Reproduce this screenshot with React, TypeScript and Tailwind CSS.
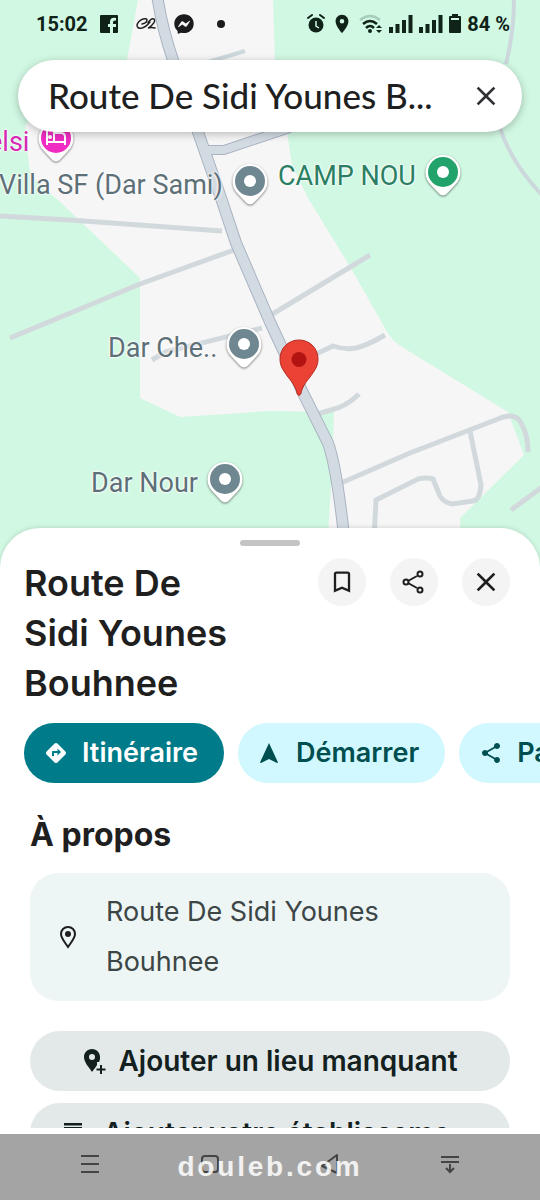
import React from 'react';
import { FaFacebookMessenger } from 'react-icons/fa';
import { MdClose, MdDirections, MdLocationOn, MdShare, MdTurnedInNot } from 'react-icons/md';

interface Place {
  name: string;
  color: string;
  textClass: string;
  position: string;
  hotel?: boolean;
}

const PLACES: Place[] = [
  { name: 'elsi', color: '#f02cc3', textClass: 'text-[#d32bb3]', position: '-left-3 top-[119px]', hotel: true },
  { name: 'Villa SF (Dar Sami)', color: '#6f8790', textClass: 'text-[#5d7078]', position: '-left-px top-[162px]' },
  { name: 'CAMP NOU', color: '#22a36b', textClass: 'text-[#2a7f62]', position: 'left-[278px] top-[153px]' },
  { name: 'Dar Che..', color: '#6f8790', textClass: 'text-[#5d7078]', position: 'left-[108px] top-[325px]' },
  { name: 'Dar Nour', color: '#6f8790', textClass: 'text-[#5d7078]', position: 'left-[91px] top-[460px]' },
];

const MINOR_ROADS = [
  'M0 216 L70 220 L222 231',
  'M10 338 L80 309 L140 284 L234 250',
  'M266 318 L370 255',
  'M152 360 L165 352 L262 328',
  'M312 356 L333 346 Q345 350 356 348 Q368 345 385 335',
  'M314 415 L338 408 Q350 403 359 394',
  'M341 483 L410 453 L498 419 Q517 411 522 425 Q528 435 528 452',
  'M470 431 L481 485 Q480 500 473 501 L452 504 Q443 502 440 496 L433 479 Q426 477 418 479 L376 500 L374 540',
  'M511 510 L545 485',
];

const THIN_ROADS = ['M514 0 Q514 32 506 64', 'M500 128 Q512 165 545 198', 'M208 62 L245 51'];

const MAIN_ROAD = 'M157 -5 Q162 28 173 60 L198 132 L220 195 L236 243 L270 322 L303 393 L328 443 Q337 468 345 545';
const SIDE_ROAD = 'M206 150 L224 150 L290 128';

const PlacePin: React.FC<{ color: string; hotel?: boolean }> = ({ color, hotel }) => (
  <svg className="h-11 w-10 shrink-0 drop-shadow-[0_1px_1px_rgba(0,0,0,0.5)]" viewBox="0 0 40 44">
    <path fill="#fff" d="M20 1A17.500 17.500 0 0 0 2.500 18.500c0 5 2 9 5.500 12.500l8.500 9a5 5 0 0 0 7 0L32 31c3.500-3.500 5.500-7.500 5.500-12.500A17.500 17.500 0 0 0 20 1z" />
    <circle cx="20" cy="18" r="15" fill={color} />
    {hotel ? (
      <g fill="none" stroke="#fff" strokeWidth="2">
        <path d="M11 10v15M11 22h18M29 25v-8q0-4-4-4h-7v9" />
        <circle cx="14" cy="17" r="1" fill="#fff" />
      </g>
    ) : (
      <circle cx="20" cy="18" r="6" fill="#fff" />
    )}
  </svg>
);

const MapCanvas: React.FC = () => (
  <div className="absolute inset-0 overflow-hidden bg-[#d1f8e2]">
    <svg className="h-full w-full" viewBox="0 0 540 570" preserveAspectRatio="xMinYMin slice">
      <path
        fill="#f6f6f6"
        d="M138 0H273L275 60L287 132L292 165L308 198L352 270L386 330Q392 341 402 347L508 412L524 455L460 518L462 570H326L332 470L334 412L270 411L180 417L140 398V278L57 199Q30 180 29 165L25 125L127 60z"
      />
      <g fill="none" stroke="#d2d9dd" strokeWidth="5">
        {MINOR_ROADS.map(d => <path key={d} d={d} />)}
      </g>
      <g fill="none" stroke="#ccd8dc" strokeWidth="4">
        {THIN_ROADS.map(d => <path key={d} d={d} />)}
      </g>
      {/* casing first, then the surface, so junctions stay open */}
      <g fill="none" stroke="#aab3c2">
        <path d={SIDE_ROAD} strokeWidth="10" />
        <path d={MAIN_ROAD} strokeWidth="12" />
      </g>
      <g fill="none" stroke="#d3dbe2">
        <path d={SIDE_ROAD} strokeWidth="8" />
        <path d={MAIN_ROAD} strokeWidth="10" />
      </g>
    </svg>

    {PLACES.map(place => (
      <div key={place.name} className={`absolute flex items-center gap-[7px] ${place.position}`}>
        <span className={`font-[Roboto,sans-serif] text-[27px] leading-[46px] whitespace-nowrap [text-shadow:0_0_2px_#fff,0_0_2px_#fff,0_0_3px_#fff] ${place.textClass}`}>
          {place.name}
        </span>
        <PlacePin color={place.color} hotel={place.hotel} />
      </div>
    ))}

    <svg className="absolute left-[279px] top-[339px] h-[58px] w-10" viewBox="0 0 40 58">
      <path
        fill="#ea4335"
        stroke="#b5281f"
        d="M20 1C9 1 1 9.500 1 20c0 7 3 11 8 18 5 6 8 11 9 16 .5 3 3.500 3 4 0 1-5 4-10 9-16 5-7 8-11 8-18C39 9.500 31 1 20 1z"
      />
      <circle cx="20" cy="20.500" r="7.500" fill="#b31412" />
    </svg>
  </div>
);

const SignalBars: React.FC = () => (
  <svg className="h-5 w-6" viewBox="0 0 24 20" fill="currentColor">
    <path d="M0 13h4v6H0zM6.500 10h4v9h-4zM13 6h4v13h-4zM19.500 1h4v18h-4z" />
  </svg>
);

const StatusBar: React.FC = () => (
  <div className="flex h-12 items-center justify-between pr-[30px] pl-9 font-[Roboto,sans-serif] text-xl font-bold text-[#0f2319]">
    <div className="flex items-center">
      <span>15:02</span>
      <svg className="ml-3 h-[18px] w-[18px]" viewBox="0 0 18 18">
        <path fill="currentColor" d="M1 0h16q1 0 1 1v16q0 1-1 1h-4v-6h3V9h-3V7q0-2 3-1.500V3q-6-1-6 4v2H8v3h2v6H1q-1 0-1-1V1q0-1 1-1z" />
      </svg>
      <svg className="ml-[18px] h-3.5 w-5" viewBox="0 0 20 14" fill="none" stroke="#222" strokeWidth="1.500" strokeLinecap="round">
        <path d="M6 7q5-1 5-4 0-2-4-1-5 2-6 6 0 4 5 3 4-1 8-6" />
        <path d="M12 6q3-5 6-4 2 2-2 6-3 3-4 3 4-1 7 0" />
      </svg>
      <FaFacebookMessenger className="ml-[18px] h-5 w-5 text-[#1b1b1d]" />
      <span className="ml-[23px] h-2 w-2 rounded-full bg-[#1b1b1d]" />
    </div>
    <div className="flex items-center">
      <svg className="mr-2 h-5 w-[18px]" viewBox="0 0 18 20">
        <path stroke="currentColor" strokeWidth="2" strokeLinecap="round" d="M1 4l4-3M17 4l-4-3" />
        <circle cx="9" cy="11" r="7.500" fill="currentColor" />
        <path fill="none" stroke="#d1f8e2" strokeWidth="1.500" d="M9 7v5l3 2" />
      </svg>
      <MdLocationOn className="mr-2 h-[22px] w-[18px]" preserveAspectRatio="xMidYMid slice" />
      <svg className="mr-1.5 h-5 w-6" viewBox="0 0 24 20" fill="none" strokeWidth="2.500">
        <path stroke="#a5cdb9" d="M1 6q10-8 20 0" />
        <path stroke="currentColor" d="M4 10q7-6 14 0M7 14q4-4 8 0" />
        <circle cx="11" cy="17" r="2" fill="currentColor" />
        <path fill="currentColor" d="M17 14l3-3 3 3zM17 16l3 3 3-3z" />
      </svg>
      <SignalBars />
      <span className="w-1.5" />
      <SignalBars />
      <svg className="mr-1.5 ml-1.5 h-5 w-3" viewBox="0 0 12 20">
        <path fill="currentColor" d="M3 0h6v2h2q1 0 1 1v15q0 1-1 1H1q-1 0-1-1V3q0-1 1-1h2z" />
        <path fill="#d1f8e2" d="M2 4h8v2H2z" />
      </svg>
      <span>84 %</span>
    </div>
  </div>
);

const SearchBar: React.FC = () => (
  <div className="mx-[18px] mt-3 flex h-[72px] items-center rounded-full bg-white pr-5 pl-[30px] shadow-[0_2px_8px_rgba(0,0,0,0.25)]">
    <input
      type="text"
      aria-label="Rechercher"
      defaultValue="Route De Sidi Younes B..."
      className="min-w-0 flex-1 bg-transparent pb-0.5 font-[Lato,sans-serif] text-[35px] font-medium text-[#1f1f1f] outline-none"
    />
    <button type="button" aria-label="Effacer" className="text-[#303134]">
      <MdClose className="h-8 w-8" />
    </button>
  </div>
);

const RoundButton: React.FC<{ label: string; children: React.ReactNode }> = ({ label, children }) => (
  <button type="button" aria-label={label} className="flex h-12 w-12 items-center justify-center rounded-full bg-[#f4f4f4] text-[#1f1f1f]">
    {children}
  </button>
);

const PlaceSheet: React.FC = () => (
  <main className="relative -mt-[42px] flex min-h-0 flex-1 flex-col rounded-t-[40px] bg-white pb-1.5 shadow-[0_-1px_4px_rgba(0,0,0,0.12)]">
    <div className="mx-auto mt-3 h-1.5 w-[60px] shrink-0 rounded-sm bg-[#c4c4c4]" />

    <div className="min-h-0 flex-1 overflow-hidden pt-3">
      <div className="flex items-start justify-between pr-[30px] pl-6">
        <h1 className="w-56 text-[36px] leading-[50px] font-semibold text-[#1f1f1f]">Route De Sidi Younes Bouhnee</h1>
        <div className="flex gap-6">
          <RoundButton label="Enregistrer">
            <MdTurnedInNot className="h-7 w-7" />
          </RoundButton>
          <RoundButton label="Partager">
            <svg className="h-6 w-6" viewBox="0 0 24 24" fill="none" stroke="currentColor" strokeWidth="2">
              <path d="M6 11l9-5M6 13l9 5" />
              <circle cx="4" cy="12" r="2.500" />
              <circle cx="18" cy="4" r="2.500" />
              <circle cx="18" cy="20" r="2.500" />
            </svg>
          </RoundButton>
          <RoundButton label="Fermer">
            <MdClose className="h-8 w-8" />
          </RoundButton>
        </div>
      </div>

      <div className="mt-[15px] flex gap-3.5 overflow-hidden pl-6 text-[27px] font-semibold whitespace-nowrap">
        <button type="button" className="flex h-[60px] shrink-0 items-center gap-3.5 rounded-full bg-[#007b8a] pr-[26px] pl-5 text-white">
          <MdDirections className="h-6 w-6" />
          Itinéraire
        </button>
        <button type="button" className="flex h-[60px] shrink-0 items-center gap-3.5 rounded-full bg-[#d1f7ff] pr-[26px] pl-5 text-[#004f50]">
          <svg className="h-6 w-6" viewBox="0 0 24 24" fill="currentColor">
            <path d="M11 2l9 19.500-1 .5-8-4-8 4-1-.5z" />
          </svg>
          Démarrer
        </button>
        <button type="button" className="flex h-[60px] shrink-0 items-center gap-3.5 rounded-full bg-[#d1f7ff] pr-[26px] pl-5 text-[#004f50]">
          <MdShare className="h-6 w-6" />
          Partager
        </button>
      </div>

      <div className="px-[30px]">
        <h2 className="mt-8 text-[32px] leading-10 font-bold text-[#1f1f1f]">À propos</h2>
        <div className="mt-[18px] flex items-center gap-[26px] rounded-[28px] bg-[#eef5f5] py-3.5 pr-24 pl-[26px]">
          <svg className="h-6 w-6 shrink-0" viewBox="0 0 24 24">
            <path fill="none" stroke="#1f1f1f" strokeWidth="2" d="M12 2C8 2 5 5 5 9c0 4 3 7 7 13 4-6 7-9 7-13 0-4-3-7-7-7z" />
            <circle cx="12" cy="9" r="3" fill="#1f1f1f" />
          </svg>
          <p className="text-[27px] leading-[50px] text-[#3c4646]">Route De Sidi Younes Bouhnee</p>
        </div>

        <div className="mt-[30px] flex flex-col gap-3 text-[28px] font-semibold whitespace-nowrap text-[#141f1f]">
          <button type="button" className="flex h-[60px] shrink-0 items-center justify-center gap-3 rounded-full bg-[#e3e9e9]">
            <svg className="h-[26px] w-6" viewBox="0 0 24 26">
              <path fill="currentColor" fillRule="evenodd" d="M10 1C5 1 2 5 2 9c0 5 4 9 8 15 2-3 4-5 5-7v-3h2c1-2 1-3 1-5 0-4-3-8-8-8zm0 5a3 3 0 1 1 0 6 3 3 0 0 1 0-6z" />
              <path stroke="currentColor" strokeWidth="2" d="M19 17v9M14.500 21.500h9" />
            </svg>
            Ajouter un lieu manquant
          </button>
          <button type="button" className="flex h-[60px] shrink-0 items-center justify-center gap-5 rounded-full bg-[#e3e9e9]">
            <svg className="h-6 w-5" viewBox="0 0 20 24" fill="currentColor">
              <path d="M1 2h18v2.500H1zM1 6h18v2l1 6v2h-1v6h-2v-6h-4v6H1v-6H0v-2l1-6zM3 16v4h8v-4z" />
            </svg>
            Ajouter votre établisseme...
          </button>
        </div>
      </div>
    </div>
  </main>
);

const NavBar: React.FC = () => (
  <nav className="relative grid h-[66px] shrink-0 grid-cols-4 items-center justify-items-center bg-[#a4a4a4] px-[30px] pb-1.5 text-[#444]">
    <button type="button" aria-label="Menu">
      <svg className="h-5 w-5" viewBox="0 0 20 20" stroke="currentColor" strokeWidth="2">
        <path d="M1 2h18M1 10h18M1 18h18" />
      </svg>
    </button>
    <button type="button" aria-label="Accueil">
      <svg className="h-5 w-5" viewBox="0 0 20 20" fill="none" stroke="currentColor" strokeWidth="2">
        <rect x="2" y="2" width="16" height="16" rx="3" />
      </svg>
    </button>
    <button type="button" aria-label="Retour">
      <svg className="h-5 w-5" viewBox="0 0 20 20" fill="none" stroke="currentColor" strokeWidth="2" strokeLinejoin="round">
        <path d="M17 1v18L2 12z" />
      </svg>
    </button>
    <button type="button" aria-label="Masquer la barre">
      <svg className="h-5 w-5" viewBox="0 0 20 20" fill="none" stroke="currentColor" strokeWidth="2">
        <path d="M1 3h18M1 8h18M10 10v8M6 14l4 4 4-4" />
      </svg>
    </button>
    <span className="pointer-events-none absolute inset-0 flex items-center justify-center font-['Liberation_Sans',sans-serif] text-[28px] font-bold tracking-widest text-white/85">
      douleb.com
    </span>
  </nav>
);

export default function App() {
  return (
    <div className="flex h-screen flex-col overflow-hidden bg-white font-[Inter,sans-serif]">
      <header className="relative h-[570px] shrink-0">
        <MapCanvas />
        <div className="relative">
          <StatusBar />
          <SearchBar />
        </div>
      </header>
      <PlaceSheet />
      <NavBar />
    </div>
  );
}
